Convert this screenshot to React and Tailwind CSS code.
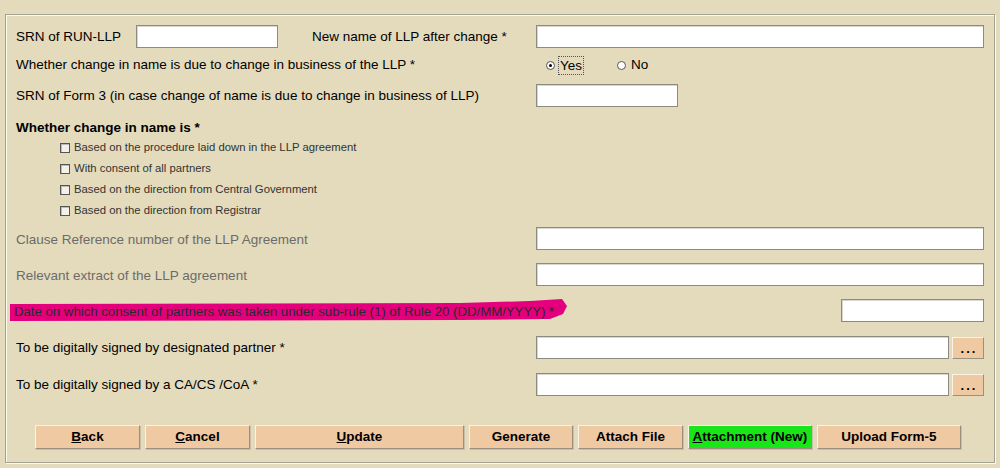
import React from 'react'

const font = { fontFamily: '"Liberation Sans", Arial, sans-serif' }

function TextBox({ className = '' }) {
    return <div className={"h-[23px] bg-white border border-[#8d8a80] shadow-[inset_1px_1px_0_#d8d6cf] " + className} />
}

function Btn({ children, className = '', green = false }) {
    return (
        <button
            className={
                "h-[24px] text-[13.5px] font-bold text-black border border-t-[#fbf3e6] border-l-[#fbf3e6] border-b-[#9c8f80] border-r-[#9c8f80] shadow-[1px_1px_0_#c9bfa9] " +
                (green ? "bg-[#19e619] " : "bg-[#efc9a2] ") +
                className
            }
        >
            {children}
        </button>
    )
}

function Dots() {
    return (
        <button className="ml-[3px] w-[32px] h-[22px] bg-[#efc9a2] border border-t-[#fbf3e6] border-l-[#fbf3e6] border-b-[#9c8f80] border-r-[#9c8f80] text-[13px] font-bold leading-none tracking-[2px] pl-[2px] pt-[2px]">
            ...
        </button>
    )
}

function Check({ label }) {
    return (
        <div className="h-[21px] flex items-center pl-[44px] pt-[2px]">
            <span className="w-[10px] h-[10px] border border-[#555] bg-[#f4f1e8] shadow-[inset_1px_1px_0_#bbb]" />
            <span className="ml-[4px] text-[11.3px] text-[#333]">{label}</span>
        </div>
    )
}

export default function App() {
    return (
        <div className="w-[1000px] h-[468px] bg-[#e4dbbd] pt-[14px] pl-[5px] text-black" style={font}>
            <div className="w-[990px] h-[449px] border border-[#a6a291] shadow-[inset_1px_1px_0_#fbf8ee,1px_1px_0_#fbf8ee] pl-[10px] pr-[10px] pt-[10px]">
                {/* row 1 */}
                <div className="flex items-center h-[23px] text-[13.5px]">
                    <span className="w-[120px] pt-[2px]">SRN of RUN-LLP</span>
                    <TextBox className="w-[142px]" />
                    <span className="ml-[34px] w-[224px] pt-[2px]">New name of LLP after change *</span>
                    <TextBox className="flex-1" />
                </div>
                {/* row 2 */}
                <div className="flex items-center h-[20px] mt-[6px] text-[13.5px] pt-[2px]">
                    <span className="w-[530px]">Whether change in name is due to change in business of the LLP *</span>
                    <span className="w-[9px] h-[9px] rounded-full border border-[#555] bg-white flex items-center justify-center">
                        <span className="w-[3px] h-[3px] rounded-full bg-black" />
                    </span>
                    <span className="ml-[3px] px-[1px] border border-dotted border-[#555] leading-[17px]">Yes</span>
                    <span className="ml-[33px] w-[9px] h-[9px] rounded-full border border-[#555] bg-white" />
                    <span className="ml-[5px]">No</span>
                </div>
                {/* row 3 */}
                <div className="flex items-center h-[23px] mt-[10px] text-[13.5px]">
                    <span className="w-[520px] pt-[2px]">SRN of Form 3 (in case change of name is due to change in business of LLP)</span>
                    <TextBox className="w-[142px]" />
                </div>
                {/* heading */}
                <div className="h-[18px] mt-[11px] pt-[2px] flex items-center text-[13.5px] font-bold">Whether change in name is *</div>
                <Check label="Based on the procedure laid down in the LLP agreement" />
                <Check label="With consent of all partners" />
                <Check label="Based on the direction from Central Government" />
                <Check label="Based on the direction from Registrar" />
                {/* clause */}
                <div className="flex items-center h-[23px] mt-[7px] text-[13.5px] text-[#6b6b6b]">
                    <span className="w-[520px] pt-[3px]">Clause Reference number of the LLP Agreement</span>
                    <TextBox className="flex-1" />
                </div>
                <div className="flex items-center h-[23px] mt-[13px] text-[13.5px] text-[#6b6b6b]">
                    <span className="w-[520px] pt-[3px]">Relevant extract of the LLP agreement</span>
                    <TextBox className="flex-1" />
                </div>
                {/* date */}
                <div className="flex items-center h-[23px] mt-[13px]">
                    <div className="relative w-[825px] h-[23px] flex items-center">
                        <svg className="absolute left-[-6px] top-[0px]" width="560" height="24" viewBox="0 0 560 24">
                            <path d="M0 5 L450 4 L520 2 L552 0 L557 7 L553 15 L540 20 L450 21 L0 22 Z" fill="#e4007c" />
                        </svg>
                        <span className="relative text-[13.2px] text-[#2a2a2a] ml-[-2px] pt-[3px]">
                            Date on which consent of partners was taken under sub-rule (1) of Rule 20 (DD/MM/YYYY) *
                        </span>
                    </div>
                    <TextBox className="flex-1" />
                </div>
                {/* signed */}
                <div className="flex items-center h-[23px] mt-[14px] text-[13.5px]">
                    <span className="w-[520px] pt-[2px]">To be digitally signed by designated partner *</span>
                    <TextBox className="flex-1" />
                    <Dots />
                </div>
                <div className="flex items-center h-[23px] mt-[14px] text-[13.5px]">
                    <span className="w-[520px] pt-[2px]">To be digitally signed by a CA/CS /CoA *</span>
                    <TextBox className="flex-1" />
                    <Dots />
                </div>
                {/* buttons */}
                <div className="flex items-center gap-[5px] mt-[29px] pl-[19px]">
                    <Btn className="w-[105px]"><span className="underline">B</span>ack</Btn>
                    <Btn className="w-[105px]"><span className="underline">C</span>ancel</Btn>
                    <Btn className="w-[209px]"><span className="underline">U</span>pdate</Btn>
                    <Btn className="w-[104px]">Generate</Btn>
                    <Btn className="w-[105px]">Attach File</Btn>
                    <Btn className="w-[124px]" green><span className="underline">A</span>ttachment (New)</Btn>
                    <Btn className="w-[144px]">Upload Form-5</Btn>
                </div>
            </div>
        </div>
    )
}
